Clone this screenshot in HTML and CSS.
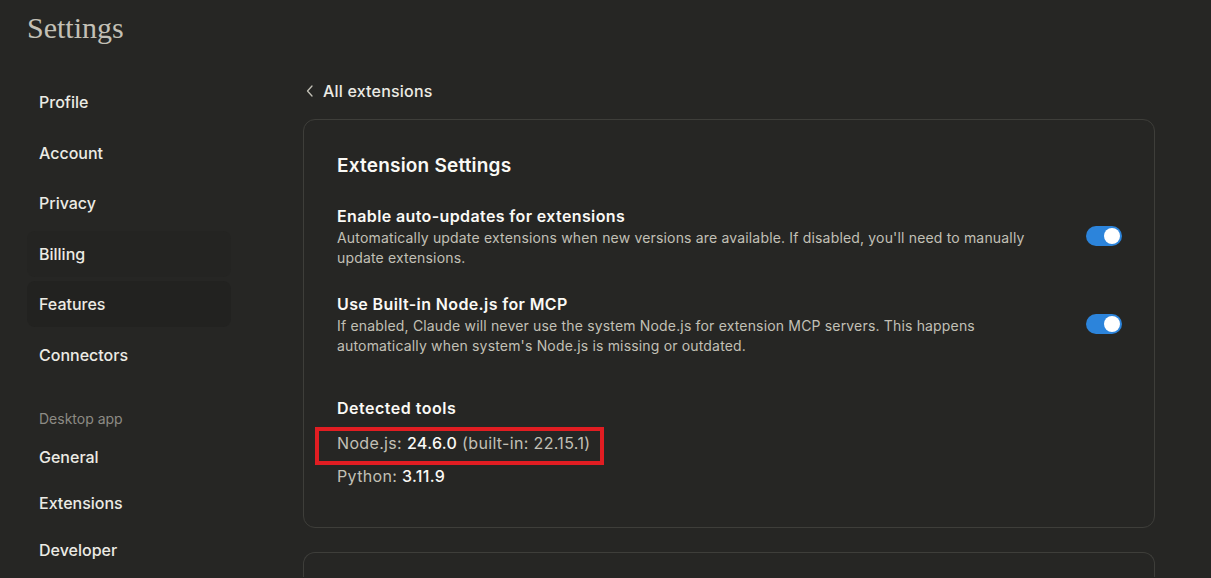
FILE: index.html
```html
<!DOCTYPE html>
<html lang="en">
<head>
<meta charset="utf-8">
<title>Settings</title>
<link rel="stylesheet" href="styles.css">
</head>
<body>
<div class="page">
  <header class="page-header">
    <h1 class="page-title">Settings</h1>
  </header>
  <div class="layout">
    <nav class="sidebar">
      <div class="nav-group nav-group-main">
        <a class="nav-item">Profile</a>
        <a class="nav-item">Account</a>
        <a class="nav-item">Privacy</a>
        <a class="nav-item nav-item-hover">Billing</a>
        <a class="nav-item nav-item-active">Features</a>
        <a class="nav-item">Connectors</a>
      </div>
      <div class="nav-label">Desktop app</div>
      <div class="nav-group nav-group-desktop">
        <a class="nav-item">General</a>
        <a class="nav-item">Extensions</a>
        <a class="nav-item">Developer</a>
      </div>
    </nav>
    <main class="main">
      <a class="back-link">
        <svg class="back-icon" width="10" height="14" viewBox="0 0 10 14" fill="none">
          <path d="M7 2 L2.5 7 L7 12" stroke="#c2c0b6" stroke-width="1.3" stroke-linecap="round" stroke-linejoin="round"/>
        </svg>
        <span>All extensions</span>
      </a>
      <section class="card">
        <h2 class="card-title">Extension Settings</h2>
        <div class="setting-row">
          <div class="setting-text">
            <div class="setting-title">Enable auto-updates for extensions</div>
            <div class="setting-desc">Automatically update extensions when new versions are available. If disabled, you'll need to manually update extensions.</div>
          </div>
          <div class="toggle"><span class="toggle-knob"></span></div>
        </div>
        <div class="setting-row">
          <div class="setting-text">
            <div class="setting-title">Use Built-in Node.js for MCP</div>
            <div class="setting-desc">If enabled, Claude will never use the system Node.js for extension MCP servers. This happens automatically when system's Node.js is missing or outdated.</div>
          </div>
          <div class="toggle"><span class="toggle-knob"></span></div>
        </div>
        <h3 class="tools-title">Detected tools</h3>
        <div class="tool-line tool-line-marked">Node.js: <span class="tool-version">24.6.0</span> (built-in: 22.15.1)</div>
        <div class="tool-line tool-line-python">Python: <span class="tool-version">3.11.9</span></div>
      </section>
      <section class="card card-next"></section>
    </main>
  </div>
</div>
</body>
</html>
```
FILE: styles.css
```css
*, *::before, *::after {
  box-sizing: border-box;
}

html, body {
  margin: 0;
  padding: 0;
  height: 100%;
  background: #262624;
  overflow: hidden;
}

body {
  font-family: "Inter", "Noto Sans", sans-serif;
  color: #faf9f5;
}

.page {
  display: flex;
  flex-direction: column;
}

.page-header {
  height: 79px;
  padding: 10px 0 0 27px;
}

.page-title {
  margin: 0;
  font-family: "Liberation Serif", "DejaVu Serif", serif;
  font-weight: 400;
  font-size: 30px;
  line-height: 36px;
  color: #c3c0b6;
}

.layout {
  display: flex;
  gap: 72px;
  padding-left: 27px;
}

.sidebar {
  width: 204px;
  flex-shrink: 0;
  display: flex;
  flex-direction: column;
}

.nav-group {
  display: flex;
  flex-direction: column;
}

.nav-group-main {
  gap: 4.5px;
}

.nav-group-desktop {
  gap: 0.5px;
  margin-top: 5px;
}

.nav-item {
  display: flex;
  align-items: center;
  height: 46px;
  padding-left: 12px;
  border-radius: 8px;
  font-size: 16px;
  font-weight: 500;
  color: #ecebe4;
}

.nav-item-hover {
  background: #242422;
}

.nav-item-active {
  background: #222220;
}

.nav-label {
  margin-top: 31px;
  padding-left: 12px;
  font-size: 14px;
  line-height: 20px;
  color: #8d8b84;
}

.main {
  width: 852px;
  flex-shrink: 0;
  display: flex;
  flex-direction: column;
}

.back-link {
  display: flex;
  align-items: center;
  gap: 8px;
  height: 24px;
  padding-left: 2px;
  font-size: 16px;
  font-weight: 500;
  letter-spacing: 0.2px;
  color: #ecebe4;
}

.back-icon {
  display: block;
}

.card {
  margin-top: 16px;
  border: 1px solid #3e3e3a;
  border-radius: 12px;
  padding: 32px 32px 39px 33px;
}

.card-title {
  margin: 0;
  font-size: 19px;
  line-height: 28px;
  font-weight: 600;
  letter-spacing: 0.2px;
  color: #faf9f5;
}

.setting-row {
  display: flex;
  align-items: center;
  justify-content: space-between;
  gap: 24px;
  margin-top: 24px;
}

.setting-text {
  flex: 1;
  min-width: 0;
}

.setting-title {
  font-size: 16px;
  line-height: 24px;
  font-weight: 600;
  letter-spacing: 0.38px;
  color: #faf9f5;
}

.setting-desc {
  font-size: 14px;
  line-height: 20px;
  letter-spacing: 0.17px;
  color: #c2c0b6;
}

.toggle {
  position: relative;
  width: 36px;
  height: 20px;
  border-radius: 10px;
  background: #2c84db;
  flex-shrink: 0;
}

.toggle-knob {
  position: absolute;
  top: 2px;
  right: 2px;
  width: 16px;
  height: 16px;
  border-radius: 50%;
  background: #ffffff;
}

.tools-title {
  margin: 40px 0 0;
  font-size: 16px;
  line-height: 24px;
  font-weight: 600;
  letter-spacing: 0.5px;
  color: #faf9f5;
}

.tool-line {
  font-size: 16px;
  line-height: 24px;
  letter-spacing: 0.34px;
  color: #c2c0b6;
}

.tool-version {
  color: #faf9f5;
  font-weight: 500;
}

.tool-line-marked {
  position: relative;
  margin-top: 11px;
}

.tool-line-marked::after {
  content: "";
  position: absolute;
  left: -22px;
  top: -4px;
  width: 289px;
  height: 38px;
  border: 4px solid #e11d22;
  pointer-events: none;
}

.tool-line-python {
  margin-top: 9px;
}

.card-next {
  margin-top: 24px;
  height: 25px;
  padding: 0;
  border-bottom: none;
  border-radius: 12px 12px 0 0;
}
```
